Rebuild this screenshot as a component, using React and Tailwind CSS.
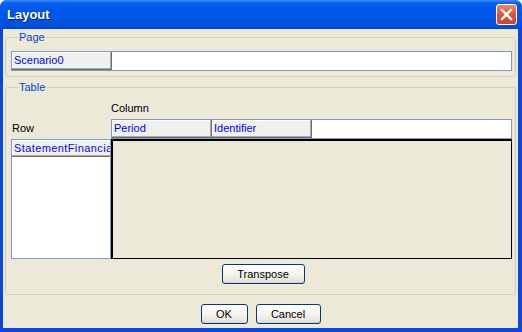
import React from "react";

const headerCell =
  "h-full w-[100px] shrink-0 overflow-hidden whitespace-nowrap bg-[#F0F0EE] pl-[2px] leading-[17px] text-[#0000FF] border-r border-b border-[#6F6F6F] shadow-[inset_-1px_-1px_0_#A9A9A9,inset_1px_1px_0_#FFFFFF]";

const xpButton =
  "h-[20px] rounded-[3px] border border-[#003C74] bg-gradient-to-b from-[#FFFFFF] via-[#F4F3EE] to-[#E3E1D6] text-[11px] leading-[17px] text-black shadow-[inset_0_-1px_0_#D6D0C5]";

function GroupBox({ label, className = "", children }) {
  return (
    <fieldset className={`rounded-[3px] border border-[#D0D0BF] ${className}`}>
      <legend className="ml-[7px] px-[1px] text-[11px] leading-[13px] text-[#0046D5]">{label}</legend>
      {children}
    </fieldset>
  );
}

export default function App() {
  return (
    <div className="flex h-[332px] w-[522px] flex-col overflow-hidden rounded-t-[7px] bg-[#0A47DA] font-['Liberation_Sans',Arial,sans-serif] text-[11px]">
      {/* title bar */}
      <div className="flex h-[29px] shrink-0 items-center justify-between bg-[linear-gradient(to_bottom,#3D8DF5_0%,#0A62EE_10%,#0058EE_25%,#0055E5_60%,#0050DC_88%,#0046CF_100%)] pl-[7px] pr-[5px]">
        <span className="text-[13px] font-bold leading-none text-white [text-shadow:1px_1px_0_#0A1E7A]">Layout</span>
        <div className="flex h-[21px] w-[21px] items-center justify-center rounded-[3px] border border-white bg-[linear-gradient(to_bottom,#F08868_0%,#E0573B_45%,#CC4424_100%)]">
          <svg width="13" height="13" viewBox="0 0 13 13">
            <path d="M2 2 L11 11 M11 2 L2 11" stroke="white" strokeWidth="2.4" strokeLinecap="square" />
          </svg>
        </div>
      </div>

      {/* client area */}
      <div className="mb-[4px] ml-[3px] mr-[4px] flex flex-1 flex-col bg-[#ECE9D8] px-[2px] pt-[2px]">
        <GroupBox label="Page" className="pb-[5px] pl-[5px] pt-[7px]">
          <div className="flex h-[20px] w-[501px] border border-[#7F9DB9] bg-white">
            <div className={headerCell}>Scenario0</div>
          </div>
        </GroupBox>

        <GroupBox label="Table" className="mt-[4px] pb-[10px] pl-[5px] pt-[8px]">
          <div className="grid grid-cols-[100px_401px]">
            <div />
            <div className="mb-[4px] leading-[13px] text-black">Column</div>

            <div className="self-end pb-[4px] pl-[1px] leading-[13px] text-black">Row</div>
            <div className="flex h-[20px] border border-[#7F9DB9] bg-white">
              <div className={headerCell}>Period</div>
              <div className={headerCell}>Identifier</div>
            </div>

            <div className="flex h-[120px] flex-col border border-[#7F9DB9] bg-white">
              <div className="h-[17px] w-full overflow-hidden whitespace-nowrap border-b border-[#6F6F6F] bg-[#F0F0EE] pl-[2px] leading-[16px] tracking-[0.4px] text-[#0000FF] shadow-[inset_0_-1px_0_#A9A9A9,inset_1px_1px_0_#FFFFFF]">
                StatementFinancial
              </div>
            </div>
            <div className="h-[120px] border border-t-2 border-l-2 border-black bg-[#ECE9D8]" />
          </div>

          <div className="mt-[5px] flex justify-center">
            <button className={`${xpButton} w-[83px]`}>Transpose</button>
          </div>
        </GroupBox>

        <div className="mt-[9px] flex justify-center gap-[8px]">
          <button className={`${xpButton} w-[47px]`}>OK</button>
          <button className={`${xpButton} w-[65px]`}>Cancel</button>
        </div>
      </div>
    </div>
  );
}
